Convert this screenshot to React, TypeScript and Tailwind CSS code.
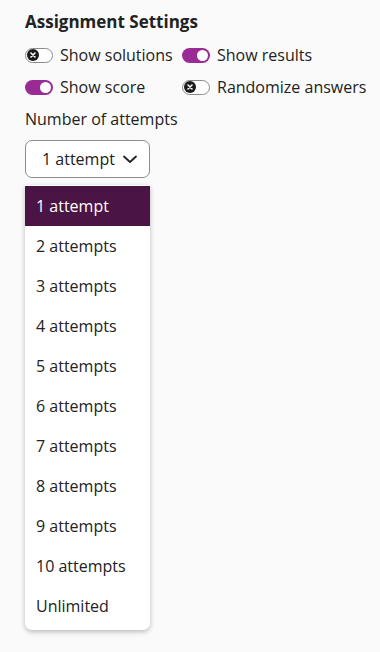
import { useState } from 'react';

type ToggleProps = {
    checked: boolean;
    label: string;
};

const Toggle = ({ checked, label }: ToggleProps) => (
    <label className="flex items-center gap-[7px] text-[16px] leading-5 whitespace-nowrap text-[#222]">
        {checked ? (
            <span className="flex h-[15px] w-[28px] items-center justify-end rounded-full bg-[#992b95] px-[2px]">
                <span className="h-[11px] w-[11px] rounded-full bg-white" />
            </span>
        ) : (
            <span className="flex h-[15px] w-[28px] items-center rounded-full border border-[#8a8a8a] bg-white px-[1px]">
                <span className="flex h-[12px] w-[12px] items-center justify-center rounded-full bg-[#1b1b1b]">
                    <svg aria-hidden="true" className="h-[6px] w-[6px]" viewBox="0 0 6 6" stroke="white" strokeWidth="1.6" strokeLinecap="round">
                        <path d="M1 1l4 4M5 1L1 5" />
                    </svg>
                </span>
            </span>
        )}
        {label}
    </label>
);

const options = [
    '1 attempt',
    '2 attempts',
    '3 attempts',
    '4 attempts',
    '5 attempts',
    '6 attempts',
    '7 attempts',
    '8 attempts',
    '9 attempts',
    '10 attempts',
    'Unlimited',
];

export default function App() {
    const [selected, setSelected] = useState(0);

    return (
        <div className="min-h-[652px] bg-[#fafafa] px-[25px] pt-[10px] font-['Open_Sans',sans-serif] text-[#222]">
            <h2 className="text-[17px] leading-6 font-bold">Assignment Settings</h2>
            <div className="mt-[11px] grid grid-cols-[157px_auto] gap-y-[12px]">
                <Toggle checked={false} label="Show solutions" />
                <Toggle checked label="Show results" />
                <Toggle checked label="Show score" />
                <Toggle checked={false} label="Randomize answers" />
            </div>
            <div className="mt-[10px] text-[16px] leading-6">Number of attempts</div>
            <button
                type="button"
                className="mt-[9px] flex h-[38px] w-[125px] items-center justify-between rounded-[7px] border border-[#8c8c8c] bg-white pr-[11px] pl-[16px] text-[16px]"
            >
                {options[selected]}
                <svg
                    aria-hidden="true"
                    className="h-[16px] w-[16px]"
                    fill="none"
                    stroke="currentColor"
                    strokeLinecap="round"
                    strokeLinejoin="round"
                    strokeWidth="1.8"
                    viewBox="0 0 16 16"
                >
                    <polyline points="2 5.5 8 11 14 5.5" />
                </svg>
            </button>
            <ul className="mt-[7px] w-[125px] overflow-hidden rounded-b-[7px] bg-white pt-px pb-[4px] shadow-[0_2px_5px_rgba(0,0,0,0.25)]">
                {options.map((option, index) => (
                    <li
                        key={option}
                        className={
                            index === selected
                                ? 'flex h-[40px] items-center bg-[#4a1445] px-[11px] text-[16px] text-white'
                                : 'flex h-[40px] items-center px-[11px] text-[16px] text-[#222]'
                        }
                        onClick={() => setSelected(index)}
                    >
                        {option}
                    </li>
                ))}
            </ul>
        </div>
    );
}
